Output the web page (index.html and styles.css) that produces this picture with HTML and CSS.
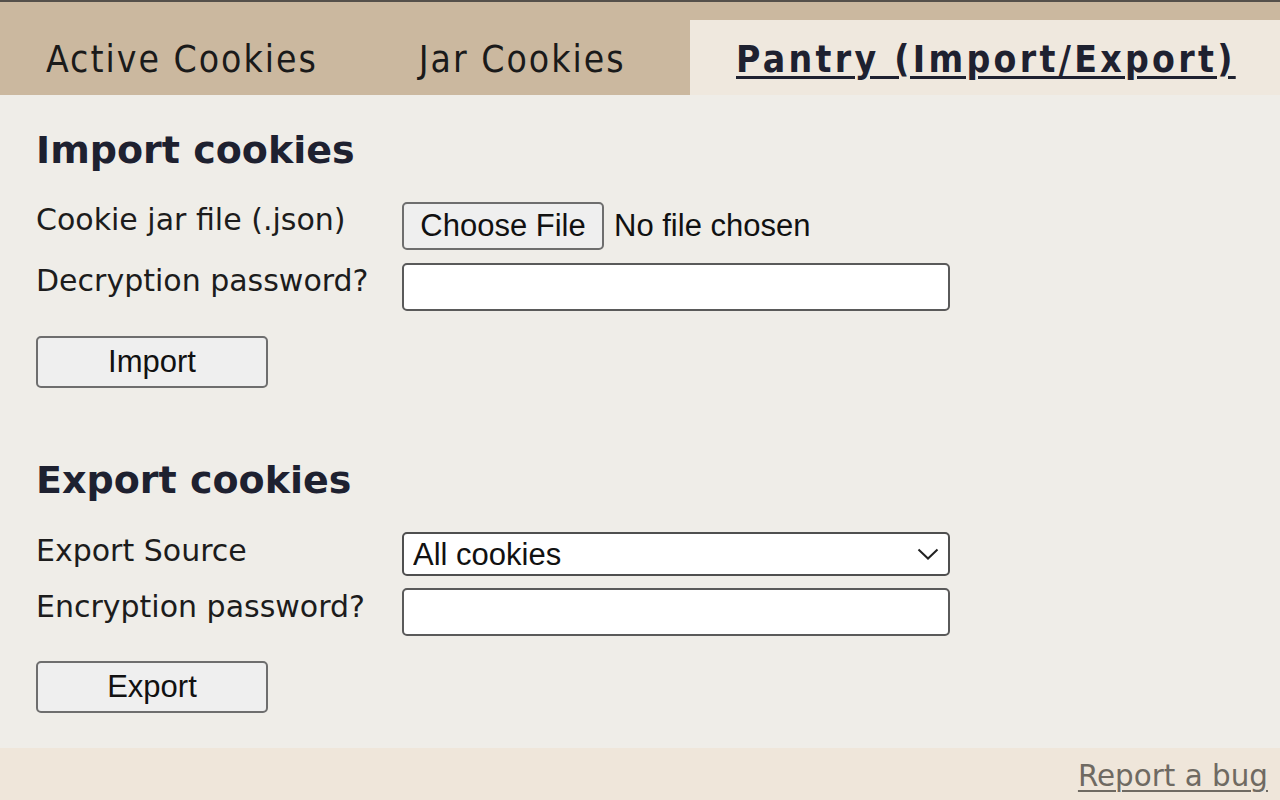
FILE: index.html
```html
<!DOCTYPE html>
<html>
<head>
<meta charset="utf-8">
<title>Cookie Jar - Pantry</title>
<link rel="stylesheet" href="styles.css">
</head>
<body>
<div class="topline"></div>
<nav class="tabs">
  <a class="tab">Active Cookies</a>
  <a class="tab">Jar Cookies</a>
  <a class="tab active">Pantry (Import/Export)</a>
</nav>
<main class="content">
  <section class="panel">
    <h2 class="heading">Import cookies</h2>
    <div class="form">
      <label class="label">Cookie jar file (.json)</label>
      <div class="file-field">
        <button class="btn file-btn" type="button">Choose File</button>
        <span class="file-status">No file chosen</span>
      </div>
      <label class="label">Decryption password?</label>
      <input class="input" type="password">
    </div>
    <button class="btn action-btn" type="button">Import</button>
  </section>
  <section class="panel export">
    <h2 class="heading">Export cookies</h2>
    <div class="form">
      <label class="label">Export Source</label>
      <div class="select-wrap">
        <select class="select"><option>All cookies</option></select>
        <svg class="chevron" width="22" height="12" viewBox="0 0 22 12"><path d="M1.5 1.5 L11 10.5 L20.5 1.5" fill="none" stroke="#222" stroke-width="2"/></svg>
      </div>
      <label class="label">Encryption password?</label>
      <input class="input" type="password">
    </div>
    <button class="btn action-btn" type="button">Export</button>
  </section>
</main>
<footer class="footer">
  <a class="bug-link" href="#">Report a bug</a>
</footer>
</body>
</html>
```
FILE: styles.css
```css
html, body {
  margin: 0;
  padding: 0;
}
body {
  width: 1280px;
  height: 800px;
  overflow: hidden;
  background: #efede8;
  font-family: "DejaVu Sans", Verdana, sans-serif;
  color: #1c1c1c;
  display: flex;
  flex-direction: column;
}
.topline {
  height: 2px;
  background: #55504a;
}
.tabs {
  height: 93px;
  background: #cbb89f;
  display: flex;
  align-items: flex-end;
  gap: 11px;
}
.tab {
  height: 75px;
  box-sizing: border-box;
  padding: 4px 44px 0 46px;
  line-height: 71px;
  font-family: "DejaVu Sans Condensed", "DejaVu Sans", sans-serif;
  font-stretch: condensed;
  font-size: 37px;
  letter-spacing: 2px;
  color: #1a1a1a;
  white-space: nowrap;
}
.tab.active {
  margin-left: auto;
  width: 590px;
  background: #efe8de;
  font-weight: bold;
  letter-spacing: 3.3px;
  color: #1e2130;
  text-decoration: underline;
  text-decoration-thickness: 3px;
  text-underline-offset: 4px;
}
.content {
  flex: 1;
  padding: 33px 36px 0 36px;
}
.heading {
  margin: 0;
  font-size: 38px;
  font-weight: bold;
  color: #1e2130;
  line-height: 44px;
}
.panel.export {
  margin-top: 70px;
}
.form {
  margin-top: 30px;
  display: grid;
  grid-template-columns: 366px 548px;
  row-gap: 13px;
  align-items: start;
}
.label {
  font-size: 30px;
  line-height: 36px;
  white-space: nowrap;
}
.export .label {
  line-height: 38px;
}
.export .form {
  row-gap: 12px;
}
.file-field {
  display: flex;
  align-items: center;
  gap: 10px;
}
.btn {
  font-family: "Liberation Sans", Arial, sans-serif;
  font-size: 31px;
  color: #111;
  background: #efefef;
  border: 2px solid #6e6e6e;
  border-radius: 5px;
  box-sizing: border-box;
  padding: 0;
}
.file-btn {
  width: 202px;
  height: 48px;
}
.file-status {
  font-family: "Liberation Sans", Arial, sans-serif;
  font-size: 31px;
  color: #111;
}
.input {
  width: 548px;
  height: 48px;
  box-sizing: border-box;
  background: #fff;
  border: 2px solid #5a5a5a;
  border-radius: 5px;
  margin: 0;
}
.action-btn {
  display: block;
  margin-top: 25px;
  width: 232px;
  height: 52px;
}
.select-wrap {
  position: relative;
  width: 548px;
  height: 44px;
}
.select {
  appearance: none;
  -webkit-appearance: none;
  width: 548px;
  height: 44px;
  box-sizing: border-box;
  background: #fff;
  border: 2px solid #4f4f4f;
  border-radius: 5px;
  padding: 0 0 0 9px;
  margin: 0;
  font-family: "Liberation Sans", Arial, sans-serif;
  font-size: 31px;
  color: #111;
}
.chevron {
  position: absolute;
  right: 11px;
  top: 16px;
  pointer-events: none;
}
.footer {
  height: 52px;
  background: #efe6da;
  display: flex;
  justify-content: flex-end;
  align-items: center;
  padding-right: 12px;
}
.bug-link {
  font-size: 29.4px;
  color: #6f6a62;
  text-decoration: underline;
  text-decoration-thickness: 2px;
  text-underline-offset: 4px;
  padding-top: 3px;
}
```
